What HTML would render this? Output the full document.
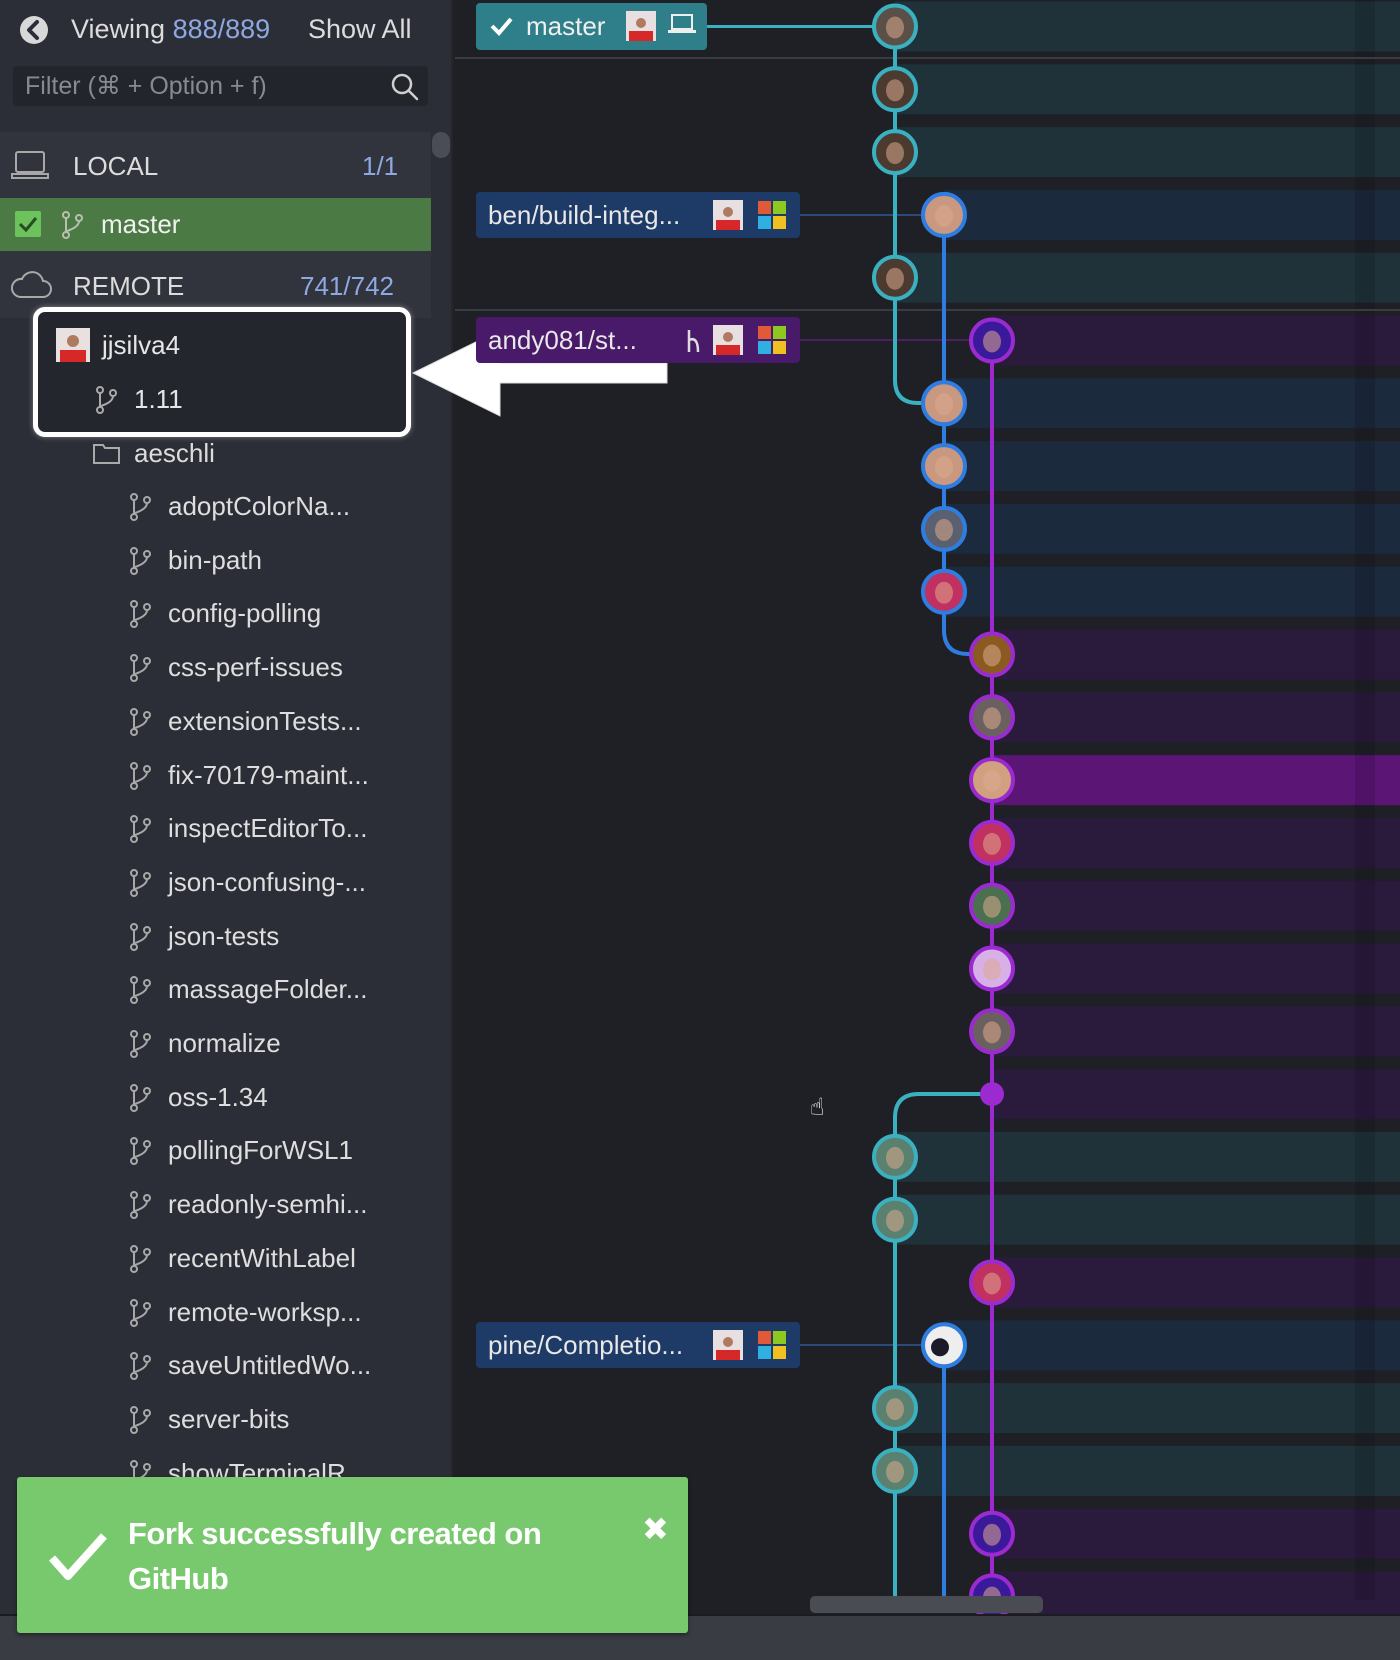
<!DOCTYPE html>
<html><head><meta charset="utf-8"><style>
*{margin:0;padding:0;box-sizing:border-box}
body{width:1400px;height:1660px;overflow:hidden;background:#1e2026;font-family:"Liberation Sans","DejaVu Sans",sans-serif;position:relative;color:#e6e6e6}
.abs{position:absolute}
#side{left:0;top:0;width:453px;height:1615px;background:#2b2e36;border-right:2px solid #24262c}
.t{position:absolute;white-space:nowrap;font-size:26px;line-height:30px}
.item{position:absolute;left:168px;font-size:26px;color:#dedede;white-space:nowrap;line-height:30px}
.bi{position:absolute;left:128px}
</style></head><body>
<div id="side" class="abs"></div>
<div class="abs" style="left:0;top:132px;width:431px;height:186px;background:#31343c"></div>
<div class="abs" style="left:0;top:198px;width:431px;height:53px;background:#4b7a45"></div>
<svg class="abs" style="left:18px;top:14px" width="32" height="32"><circle cx="16" cy="16" r="14" fill="#d8d8d8"/><path d="M19 8 L11 16 L19 24" stroke="#2b2e36" stroke-width="4" fill="none" stroke-linecap="round" stroke-linejoin="round"/></svg>
<div class="t" style="left:71px;top:14px;color:#dcdcdc;font-size:27px">Viewing <span style="color:#8ea8e2">888/889</span></div>
<div class="t" style="left:308px;top:14px;color:#dcdcdc;font-size:27px">Show All</div>
<div class="abs" style="left:13px;top:66px;width:415px;height:40px;background:#23252c;border-radius:4px"></div>
<div class="t" style="left:25px;top:71px;color:#878a92;font-size:25px">Filter (⌘ + Option + f)</div>
<svg class="abs" style="left:390px;top:72px" width="30" height="30"><circle cx="12" cy="12" r="9" stroke="#cfcfcf" stroke-width="2.5" fill="none"/><path d="M19 19 L27 27" stroke="#cfcfcf" stroke-width="2.5" stroke-linecap="round"/></svg>
<div class="abs" style="left:432px;top:132px;width:18px;height:26px;background:#4a4d55;border-radius:9px"></div>
<svg class="abs" style="left:11px;top:150px" width="40" height="32"><rect x="5" y="2" width="28" height="20" rx="2" stroke="#a8a8a8" stroke-width="2" fill="none"/><path d="M1 24 H37 V28 H1 Z" stroke="#a8a8a8" stroke-width="2" fill="none"/></svg>
<div class="t" style="left:73px;top:151px;color:#dcdcdc">LOCAL</div>
<div class="t" style="left:362px;top:151px;color:#8ea8e2">1/1</div>
<svg class="abs" style="left:14px;top:210px" width="30" height="30"><rect x="1" y="1" width="26" height="26" rx="2" fill="#6cc35b"/><path d="M6 14 L12 20 L22 8" stroke="#2b4a27" stroke-width="3" fill="none"/></svg>
<svg class="abs" style="left:60px;top:210px" width="26" height="30"><g stroke="#b8c0b0" stroke-width="2" fill="none"><circle cx="6" cy="5" r="3"/><circle cx="6" cy="25" r="3"/><circle cx="19" cy="8" r="3"/><path d="M6 8 V22 M19 11 Q19 17 7 21"/></g></svg>
<div class="t" style="left:101px;top:209px;color:#f0f0f0">master</div>
<svg class="abs" style="left:10px;top:270px" width="42" height="30"><path d="M10 27 H33 A8 8 0 0 0 33 11 A11 11 0 0 0 12 9 A9 9 0 0 0 10 27 Z" stroke="#a8a8a8" stroke-width="2" fill="none"/></svg>
<div class="t" style="left:73px;top:271px;color:#dcdcdc">REMOTE</div>
<div class="t" style="left:300px;top:271px;color:#8ea8e2">741/742</div>
<div class="abs" style="left:33px;top:307px;width:378px;height:130px;border:5px solid #fff;border-radius:12px;background:#24262e;box-shadow:0 0 6px rgba(255,255,255,.4)"></div>
<svg class="abs" style="left:56px;top:328px" width="34" height="34"><rect width="34" height="34" fill="#e9e0e0"/><circle cx="17" cy="13" r="6" fill="#b07a60"/><rect x="4" y="22" width="26" height="12" fill="#d62828"/></svg>
<div class="t" style="left:102px;top:330px;color:#e6e6e6">jjsilva4</div>
<svg class="abs" style="left:94px;top:385px" width="26" height="30"><g stroke="#aaa" stroke-width="2" fill="none"><circle cx="6" cy="5" r="3"/><circle cx="6" cy="25" r="3"/><circle cx="19" cy="8" r="3"/><path d="M6 8 V22 M19 11 Q19 17 7 21"/></g></svg>
<div class="t" style="left:134px;top:384px;color:#e6e6e6">1.11</div>
<svg class="abs" style="left:92px;top:442px" width="30" height="24"><path d="M2 3 H11 L13 6 H27 V21 H2 Z" stroke="#aaa" stroke-width="2" fill="none"/></svg>
<div class="t" style="left:134px;top:438px;color:#dcdcdc">aeschli</div>
<div id="items"></div>
<svg class="abs" style="left:405px;top:325px" width="270" height="95"><path d="M8 48 L95 5 L95 38 L262 38 L262 58 L95 58 L95 91 Z" fill="#fff" stroke="#ddd" stroke-width="1"/></svg>
<svg class="abs" id="g" style="left:455px;top:0" width="945" height="1615" viewBox="455 0 945 1615"></svg>
<div class="abs" style="left:810px;top:1596px;width:233px;height:17px;background:#4a4c54;border-radius:5px"></div>
<div class="abs" style="left:0;top:1614px;width:1400px;height:46px;background:#3a3c44;border-top:2px solid #1b1c20"></div>
<div class="abs" style="left:17px;top:1477px;width:671px;height:156px;background:#78c96e;border-radius:3px;box-shadow:0 2px 4px rgba(0,0,0,.4)"></div>
<svg class="abs" style="left:48px;top:1530px" width="60" height="52"><path d="M4 28 L20 46 L56 6" stroke="#fff" stroke-width="8" fill="none" stroke-linejoin="round"/></svg>
<div class="abs" style="left:128px;top:1511px;font-size:31px;font-weight:bold;color:#fff;line-height:45px;letter-spacing:-0.5px">Fork successfully created on<br>GitHub</div>
<div class="abs" style="left:642px;top:1510px;font-size:32px;font-weight:bold;color:#fff">✖</div>
<script>
var names=["adoptColorNa...","bin-path","config-polling","css-perf-issues","extensionTests...","fix-70179-maint...","inspectEditorTo...","json-confusing-...","json-tests","massageFolder...","normalize","oss-1.34","pollingForWSL1","readonly-semhi...","recentWithLabel","remote-worksp...","saveUntitledWo...","server-bits","showTerminalR"];
var h="";
names.forEach(function(n,i){var y=507+53.7*i;
h+='<svg class="bi" style="top:'+(y-15)+'px" width="26" height="30"><g stroke="#a8a8a8" stroke-width="2" fill="none"><circle cx="6" cy="5" r="3"/><circle cx="6" cy="25" r="3"/><circle cx="19" cy="8" r="3"/><path d="M6 8 V22 M19 11 Q19 17 7 21"/></g></svg>';
h+='<div class="item" style="top:'+(y-16)+'px">'+n+'</div>';});
document.getElementById("items").innerHTML=h;
var X={A:895,B:944,C:992},LC={A:"#3ab0c0",B:"#2f7de0",C:"#9b2bd0"},BC={A:"#1f3139",B:"#1c2a3e",C:"#2a1a3c"};
var rows="AAABACBBBBCCCCCCCCAACBAACC".split("");
var av=["#5a5048","#4a3a30","#4a3a30","#c89880","#4a3a30","#3a1a9a","#c89880","#c89880","#5a6070","#c03060","#8a5a20","#6a6060","#d0a080","#c03060","#4a7050","#d8b0e8","#6a6060","","#5a8070","#5a8070","#c03060","#eee","#5a8070","#5a8070","#3a1a9a","#3a1a9a"];
var s="";
function Y(i){return 26.5+62.8*i}
rows.forEach(function(l,i){var y=Y(i);var c=i==12?"#5a1575":BC[l];s+='<rect x="'+X[l]+'" y="'+(y-25)+'" width="'+(1400-X[l])+'" height="50" fill="'+c+'"/>';});
s+='<rect x="1355" y="0" width="20" height="1600" fill="rgba(0,0,0,0.12)"/>';
s+='<line x1="455" y1="58" x2="1400" y2="58" stroke="#3a3c44" stroke-width="2"/><line x1="455" y1="310" x2="1400" y2="310" stroke="#3a3c44" stroke-width="2"/>';
s+='<path d="M707 26.5 H875" stroke="#3ab0c0" stroke-width="3"/>';
s+='<path d="M800 215 H944" stroke="#2a4a7a" stroke-width="2"/><path d="M800 340 H992" stroke="#4a2060" stroke-width="2"/><path d="M800 1345 H944" stroke="#2a4a7a" stroke-width="2"/>';
s+='<path d="M895 26 V380 Q895 403 918 403 H944" stroke="#3ab0c0" stroke-width="4" fill="none"/>';
s+='<path d="M944 215 V630 Q944 654 968 654 H992" stroke="#2f7de0" stroke-width="4" fill="none"/>';
s+='<path d="M992 340 V1600" stroke="#9b2bd0" stroke-width="4" fill="none"/>';
s+='<path d="M992 1094 H919 Q895 1094 895 1118 V1596" stroke="#3ab0c0" stroke-width="4" fill="none"/>';
s+='<path d="M944 1345 V1596" stroke="#2f7de0" stroke-width="4" fill="none"/>';
rows.forEach(function(l,i){var y=Y(i),x=X[l];
if(i==17){s+='<circle cx="'+x+'" cy="'+y+'" r="12" fill="#9b2bd0"/>';return;}
s+='<circle cx="'+x+'" cy="'+y+'" r="21" fill="'+av[i]+'" stroke="'+LC[l]+'" stroke-width="4"/>';
if(i==21){s+='<circle cx="'+(x-4)+'" cy="'+(y+2)+'" r="9" fill="#1a1a2a"/>';}
else{s+='<ellipse cx="'+x+'" cy="'+(y+1)+'" rx="9" ry="11" fill="rgba(220,170,140,0.55)"/>';}
});
function label(x,y,w,h,bg,txt){s+='<rect x="'+x+'" y="'+y+'" width="'+w+'" height="'+h+'" rx="4" fill="'+bg+'"/><text x="'+(x+12)+'" y="'+(y+h/2+9)+'" font-family="Liberation Sans, sans-serif" font-size="26" fill="#e8e8e8">'+txt+'</text>';}
function pic(x,y){s+='<rect x="'+x+'" y="'+y+'" width="30" height="30" fill="#e8e0e0"/><circle cx="'+(x+15)+'" cy="'+(y+12)+'" r="5" fill="#b07a60"/><rect x="'+(x+3)+'" y="'+(y+20)+'" width="24" height="10" fill="#d62828"/>';}
function ms(x,y){s+='<rect x="'+x+'" y="'+y+'" width="13" height="13" fill="#e05a3a"/><rect x="'+(x+15)+'" y="'+y+'" width="13" height="13" fill="#8cc820"/><rect x="'+x+'" y="'+(y+15)+'" width="13" height="13" fill="#30b0e0"/><rect x="'+(x+15)+'" y="'+(y+15)+'" width="13" height="13" fill="#f0c020"/>';}
label(476,3,231,47,"#2e7f8a","");
s+='<path d="M492 26 L499 33 L511 19" stroke="#fff" stroke-width="4" fill="none"/><text x="526" y="35" font-family="Liberation Sans, sans-serif" font-size="26" fill="#f0f0f0">master</text>';
pic(626,11);s+='<rect x="672" y="15" width="20" height="14" stroke="#eee" stroke-width="2" fill="none"/><rect x="668" y="30" width="28" height="3" fill="#eee"/>';
label(476,192,324,46,"#1e3a66","ben/build-integ...");pic(713,200);ms(758,201);
label(476,317,324,46,"#4a1a6a","andy081/st...");s+='<path d="M689 330 V352 M689 340 Q698 336 698 352" stroke="#ddd" stroke-width="2.5" fill="none"/>';pic(713,325);ms(758,326);
label(476,1322,324,46,"#1e3a66","pine/Completio...");pic(713,1330);ms(758,1331);
s+='<text x="810" y="1115" font-size="24" fill="#fff">☝</text>';
document.getElementById("g").innerHTML=s;
</script>
</body></html>
